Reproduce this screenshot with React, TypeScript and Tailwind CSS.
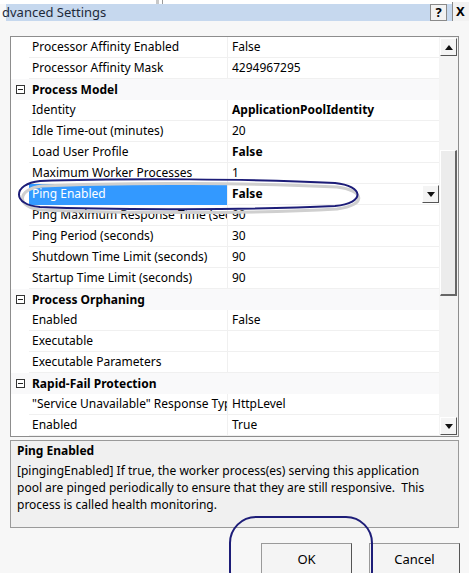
import React from "react";

type Row =
  | { kind: "cat"; label: string }
  | { kind: "prop"; label: string; value: string; bold?: boolean; selected?: boolean; dropdown?: boolean };

const rows: Row[] = [
  { kind: "prop", label: "Processor Affinity Enabled", value: "False" },
  { kind: "prop", label: "Processor Affinity Mask", value: "4294967295" },
  { kind: "cat", label: "Process Model" },
  { kind: "prop", label: "Identity", value: "ApplicationPoolIdentity", bold: true },
  { kind: "prop", label: "Idle Time-out (minutes)", value: "20" },
  { kind: "prop", label: "Load User Profile", value: "False", bold: true },
  { kind: "prop", label: "Maximum Worker Processes", value: "1" },
  { kind: "prop", label: "Ping Enabled", value: "False", bold: true, selected: true, dropdown: true },
  { kind: "prop", label: "Ping Maximum Response Time (seconds)", value: "90" },
  { kind: "prop", label: "Ping Period (seconds)", value: "30" },
  { kind: "prop", label: "Shutdown Time Limit (seconds)", value: "90" },
  { kind: "prop", label: "Startup Time Limit (seconds)", value: "90" },
  { kind: "cat", label: "Process Orphaning" },
  { kind: "prop", label: "Enabled", value: "False" },
  { kind: "prop", label: "Executable", value: "" },
  { kind: "prop", label: "Executable Parameters", value: "" },
  { kind: "cat", label: "Rapid-Fail Protection" },
  { kind: "prop", label: "\"Service Unavailable\" Response Type", value: "HttpLevel" },
  { kind: "prop", label: "Enabled", value: "True" },
];

function MinusBox() {
  return (
    <div className="w-[9px] h-[9px] border border-[#333] bg-white flex items-center justify-center">
      <div className="w-[5px] h-px bg-[#222]" />
    </div>
  );
}

function ArrowBtn({ up }: { up?: boolean }) {
  return (
    <div className="w-[17px] h-[18px] bg-[#f4f4f4] border-t border-l border-t-white border-l-white border-r border-b border-r-[#555] border-b-[#555] flex items-center justify-center">
      <svg width="8" height="5" viewBox="0 0 8 5">
        {up ? <polygon points="0,5 8,5 4,0" fill="#111" /> : <polygon points="0,0 8,0 4,5" fill="#111" />}
      </svg>
    </div>
  );
}

export default function App() {
  return (
    <div
      className="relative w-[469px] h-[573px] overflow-hidden bg-[#f7f7f7] text-[12px] text-black"
      style={{ fontFamily: '"Noto Sans", "Open Sans", sans-serif' }}
    >
      {/* top strip */}
      <div className="h-[4px] bg-white flex">
        <div className="ml-[156px] w-[3px] bg-[#c8c8c8]" />
        <div className="ml-[3px] w-[1px] bg-[#9a9a9a]" />
      </div>
      {/* title bar */}
      <div className="h-[17px] flex items-center bg-[#c6d8ee] ml-[6px] mr-[8px] relative">
        <span className="ml-[-4px] text-[13px] leading-none text-[#1e2a3a]">dvanced Settings</span>
        <div className="ml-auto mr-[14px] w-[17px] h-[17px] bg-[#f2f2f2] border border-[#8a8a8a] flex items-center justify-center text-[13px] font-bold leading-none">
          ?
        </div>
      </div>
      <div className="absolute top-[2px] left-[452px] w-[17px] h-[19px] bg-[#f2f2f2] border-l border-[#8a8a8a] flex items-center pl-[3px] text-[13px] font-bold leading-none">
        X
      </div>

      {/* property grid */}
      <div className="mt-[15px] mx-[10px] border border-[#8d8d8d] bg-white flex h-[401px]">
        <div className="flex-1 flex flex-col">
          {rows.map((r, i) =>
            r.kind === "cat" ? (
              <div key={i} className="h-[21px] flex items-center bg-[#f9f9fa]">
                <div className="w-[18px] flex justify-center">
                  <MinusBox />
                </div>
                <span className="ml-[3px] font-bold whitespace-nowrap">{r.label}</span>
              </div>
            ) : (
              <div key={i} className="h-[21px] flex">
                <div className="w-[18px] shrink-0" />
                <div
                  className={`w-[198px] shrink-0 overflow-hidden whitespace-nowrap flex items-center pl-[3px] border-b ${
                    r.selected ? "bg-[#3399ff] text-white border-[#3399ff]" : "border-[#f0f0f0]"
                  }`}
                >
                  {r.label}
                </div>
                <div className="flex-1 flex items-center pl-[4px] border-b border-l border-[#f0f0f0] whitespace-nowrap">
                  <span className={r.bold ? "font-bold" : ""}>{r.value}</span>
                  {r.dropdown && (
                    <div className="ml-auto">
                      <ArrowBtn />
                    </div>
                  )}
                </div>
              </div>
            )
          )}
        </div>
        {/* scrollbar */}
        <div className="w-[19px] bg-[#f4f4f4] flex flex-col items-center pt-px pb-px">
          <ArrowBtn up />
          <div className="mt-[94px] w-[17px] h-[146px] bg-[#ececec] border-t border-l border-white border-r-2 border-b-2 border-r-[#666] border-b-[#666]" />
          <div className="mt-auto">
            <ArrowBtn />
          </div>
        </div>
      </div>

      {/* description */}
      <div className="mt-[3px] mx-[10px] h-[88px] border border-[#9a9a9a] bg-[#f0f0f0] pl-[6px] pr-[26px] pt-[1px]">
        <div className="font-bold leading-[18px]">Ping Enabled</div>
        <div className="leading-[17px] mt-[2px]">
          [pingingEnabled] If true, the worker process(es) serving this application pool are pinged periodically to
          ensure that they are still responsive.&nbsp; This process is called health monitoring.
        </div>
      </div>

      {/* buttons */}
      <div className="mt-[15px] mr-[9px] flex justify-end gap-[17px]">
        <div className="w-[91px] h-[34px] bg-[#f4f4f4] border border-[#9a9a9a] border-r-[#555] flex items-center justify-center text-[13px]">
          OK
        </div>
        <div className="w-[91px] h-[34px] bg-[#f4f4f4] border border-[#9a9a9a] border-r-[#555] flex items-center justify-center text-[13px]">
          Cancel
        </div>
      </div>

      {/* annotations */}
      <svg className="absolute left-0 top-0 pointer-events-none" width="469" height="573">
        <path
          d="M40 184 C 120 180, 260 181, 335 185 C 362 188, 366 203, 335 207 C 250 212, 110 211, 40 208 C 14 206, 14 187, 40 184 Z"
          fill="none"
          stroke="#cfcfcf"
          strokeWidth="3"
          transform="translate(2,2)"
        />
        <path
          d="M40 181 C 120 178, 260 179, 335 183 C 364 186, 366 203, 335 206 C 250 210, 110 210, 40 207 C 12 205, 12 184, 40 181 Z"
          fill="none"
          stroke="#1d1d78"
          strokeWidth="2"
        />
        <rect x="230" y="517" width="142" height="80" rx="26" fill="none" stroke="#1d1d78" strokeWidth="2" />
      </svg>
    </div>
  );
}
